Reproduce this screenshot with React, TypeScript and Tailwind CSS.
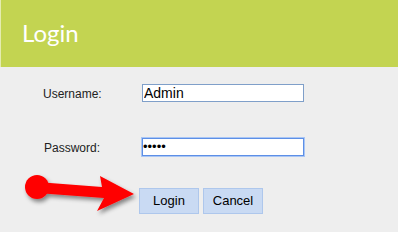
import React, { useState } from 'react';

const Arrow: React.FC = () => (
  <svg
    className="absolute left-0 top-[160px] pointer-events-none"
    width="140"
    height="60"
    viewBox="0 160 140 60"
  >
    <defs>
      <filter id="shadow" x="-20%" y="-20%" width="150%" height="160%">
        <feDropShadow dx="2" dy="3" stdDeviation="2" floodColor="#000" floodOpacity="0.45" />
      </filter>
    </defs>
    <g fill="#ff0000" filter="url(#shadow)">
      <circle cx="37" cy="187" r="12" />
      <polygon points="37,182 102,187 100,176 134,194 97,211 104,198 37,193" />
    </g>
  </svg>
);

export default function App() {
  const [username, setUsername] = useState('Admin');
  const [password, setPassword] = useState('12345');

  return (
    <div className="relative w-[398px] h-[232px] bg-[#eeeeee] overflow-hidden font-['Liberation_Sans',Arial,sans-serif]">
      {/* Header */}
      <div className="h-[67px] bg-[#c3d451] border-l border-[#e4ecb0] flex items-center pl-[21px]">
        <h1 className="text-white text-[24px] leading-none pb-[1px] font-['Lato',sans-serif]">Login</h1>
      </div>

      {/* Form */}
      <div className="pt-[17px]">
        <div className="flex items-start h-[18px]">
          <label className="w-[142px] pl-[43px] mt-[3px] leading-[14px] text-[12px] text-[#222]">Username:</label>
          <input
            value={username}
            onChange={(e) => setUsername(e.target.value)}
            className="w-[162px] h-[18px] bg-white border border-[#7f9fc9] px-[1px] text-[14px] text-black outline-none"
          />
        </div>

        <div className="flex items-start h-[18px] mt-[36px]">
          <label className="w-[142px] pl-[44px] mt-[3px] leading-[14px] text-[12px] text-[#222]">Password:</label>
          <input
            type="password"
            value={password}
            onChange={(e) => setPassword(e.target.value)}
            className="w-[162px] h-[18px] bg-white border border-[#5d8fe6] ring-1 ring-[#a9c6f5] px-0 text-[13px] text-black outline-none"
          />
        </div>

        <div className="flex gap-[4px] pl-[139px] mt-[32px]">
          <button className="w-[60px] h-[26px] bg-[#c9daf3] border border-[#aec7ec] text-[13px] text-black">
            Login
          </button>
          <button className="w-[60px] h-[26px] bg-[#c9daf3] border border-[#aec7ec] text-[13px] text-black">
            Cancel
          </button>
        </div>
      </div>

      <Arrow />
    </div>
  );
}
